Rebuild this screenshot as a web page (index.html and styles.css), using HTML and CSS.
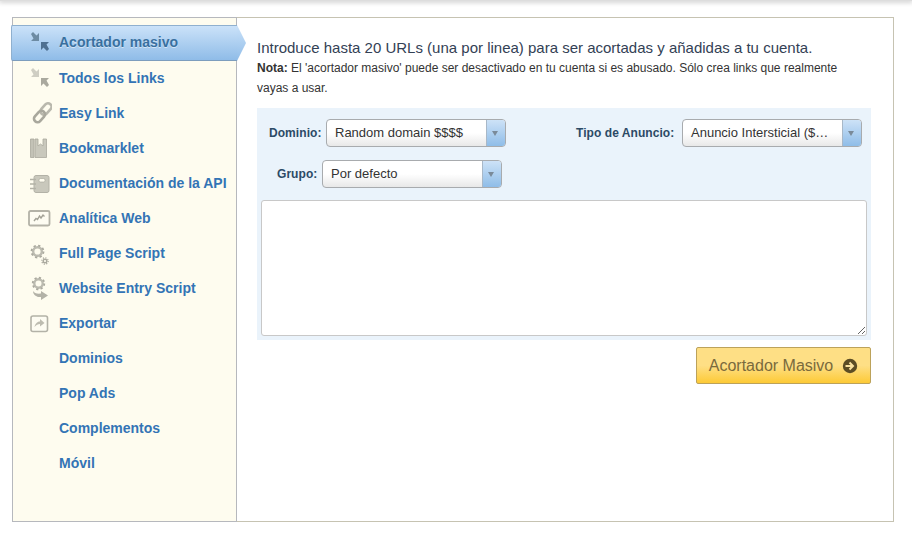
FILE: index.html
```html
<!DOCTYPE html>
<html lang="es">
<head>
<meta charset="utf-8">
<title>Acortador masivo</title>
<link rel="stylesheet" href="styles.css">
</head>
<body>
<div class="topbar"></div>
<div class="shell">
  <nav class="side">
    <a class="item active"><span class="ico"><svg width="24" height="24" viewBox="0 0 24 24"><path fill="#6d8ba3" d="M3 4 5 2l3.500 3.500L11 3v8H3l2.500-2.500z"/><path fill="#4f7091" d="M21 19l-2 2-3.500-3.500L13 20v-8h8l-2.500 2.500z"/></svg></span><span>Acortador masivo</span></a>
    <a class="item"><span class="ico"><svg width="24" height="24" viewBox="0 0 24 24"><path fill="#cfcec3" d="M3 4 5 2l3.500 3.500L11 3v8H3l2.500-2.500z"/><path fill="#aaa99e" d="M21 19l-2 2-3.500-3.500L13 20v-8h8l-2.500 2.500z"/></svg></span><span>Todos los Links</span></a>
    <a class="item"><span class="ico"><svg width="24" height="24" viewBox="0 0 24 24" fill="none" stroke-width="2.600"><rect x="14.500" y="1.500" width="7" height="13" rx="3.500" stroke="#b9b8ad" transform="rotate(42 18 8)"/><rect x="8" y="9" width="7" height="13" rx="3.500" stroke="#a9a89d" transform="rotate(42 11.500 15.500)"/></svg></span><span>Easy Link</span></a>
    <a class="item"><span class="ico"><svg width="24" height="24" viewBox="0 0 24 24"><path fill="#c3c2b6" stroke="#a9a89d" stroke-width=".8" d="M2.500 3h3.500v18.500H2.500z"/><path fill="#c9c8bc" stroke="#a9a89d" stroke-width=".8" d="M7 3h3v7l2.500-2 2.500 2V3h3.500v18.500H7z"/></svg></span><span>Bookmarklet</span></a>
    <a class="item"><span class="ico"><svg width="24" height="24" viewBox="0 0 24 24"><rect x="6" y="4.500" width="15" height="17" rx="2" fill="#c9c8bc" stroke="#b3b2a7"/><rect x="11" y="7.500" width="6" height="3.500" rx="1.500" fill="#fffdf0" stroke="#a3a297" stroke-width=".6"/><path stroke="#b3b2a7" stroke-width="1.600" d="M2 8.500h6M2 13h6M2 17.500h6"/></svg></span><span>Documentación de la API</span></a>
    <a class="item"><span class="ico"><svg width="24" height="24" viewBox="0 0 24 24"><rect x="1" y="5" width="20.500" height="14.500" rx="1.500" fill="#fdfcf2" stroke="#b3b2a7" stroke-width="1.800"/><path fill="none" stroke="#a3a297" stroke-width="1.400" d="M6 15l2-2.500 1.500 1 2-3.500 1.500 2 2-3 1.500 1.500"/></svg></span><span>Analítica Web</span></a>
    <a class="item"><span class="ico"><svg width="24" height="24" viewBox="0 0 24 24" fill="none"><circle cx="9.500" cy="10.500" r="4.300" stroke="#bcbbb0" stroke-width="2.400"/><circle cx="9.500" cy="10.500" r="6" stroke="#aaa99e" stroke-width="1.800" stroke-dasharray="2.300 2.400"/><circle cx="17" cy="20" r="1.800" stroke="#aaa99e" stroke-width="1.400"/><circle cx="17" cy="20" r="3.200" stroke="#aaa99e" stroke-width="1.200" stroke-dasharray="1.200 1.300"/></svg></span><span>Full Page Script</span></a>
    <a class="item"><span class="ico"><svg width="24" height="24" viewBox="0 0 24 24" fill="none"><circle cx="10.500" cy="7.500" r="4.200" stroke="#bcbbb0" stroke-width="2.400"/><circle cx="10.500" cy="7.500" r="5.800" stroke="#aaa99e" stroke-width="1.800" stroke-dasharray="2.200 2.300"/><path fill="#b3b2a7" d="M5 15c1 2 4 3 8 2.500V15l7 4.500-7 4.500v-3c-4 .5-8-2-8-6z"/></svg></span><span>Website Entry Script</span></a>
    <a class="item"><span class="ico"><svg width="24" height="24" viewBox="0 0 24 24"><rect x="3" y="5" width="16.500" height="15.500" rx="2" fill="#fdfcf2" stroke="#b3b2a7" stroke-width="1.600"/><path fill="#bdbcb0" d="M6.500 16c.5-3 2.500-5.500 5.500-5.500V8l4.500 4-4.500 3.500V13c-2 0-4 1-5.500 3z"/></svg></span><span>Exportar</span></a>
    <a class="item"><span class="ico"></span><span>Dominios</span></a>
    <a class="item"><span class="ico"></span><span>Pop Ads</span></a>
    <a class="item"><span class="ico"></span><span>Complementos</span></a>
    <a class="item"><span class="ico"></span><span>Móvil</span></a>
  </nav>
  <main class="main">
    <p class="intro">Introduce hasta 20 URLs (una por linea) para ser acortadas y añadidas a tu cuenta.</p>
    <p class="note"><b>Nota:</b> El 'acortador masivo' puede ser desactivado en tu cuenta si es abusado. Sólo crea links que realmente vayas a usar.</p>
    <form class="panel">
      <div class="row">
        <div class="field"><span class="lbl lbl-dom">Dominio:</span><div class="combo"><span class="val">Random domain $$$$</span><span class="arrow"></span></div></div>
        <div class="field"><span class="lbl lbl-tipo">Tipo de Anuncio:</span><div class="combo"><span class="val">Anuncio Intersticial ($…</span><span class="arrow"></span></div></div>
      </div>
      <div class="row group">
        <div class="field"><span class="lbl lbl-grupo">Grupo:</span><div class="combo"><span class="val">Por defecto</span><span class="arrow"></span></div></div>
      </div>
      <textarea class="urls"></textarea>
    </form>
    <div class="actions">
      <button class="go" type="button">Acortador Masivo<svg width="16" height="16" viewBox="0 0 16 16"><circle cx="8" cy="8" r="7.200" fill="#5c4d24"/><path fill="none" stroke="#fbe3a0" stroke-width="2" d="M3.500 8h7M7.500 4.500 11 8l-3.500 3.500"/></svg></button>
    </div>
  </main>
</div>
</body>
</html>
```
FILE: styles.css
```css
* { box-sizing: border-box; }
html, body { margin: 0; padding: 0; background: #fff; }
body { font-family: "Liberation Sans", Arial, sans-serif; color: #333; height: 542px; overflow: hidden; }
.topbar { height: 1px; background: #ddd; box-shadow: 0 0 5px 1px rgba(0,0,0,.28); }
.shell {
  display: flex;
  height: 505px;
  margin: 16px 18px 0 12px;
  border: 1px solid #c6c3b2;
}
.side {
  width: 225px;
  flex: none;
  margin: -1px 0 -1px -1px;
  padding-top: 7px;
  background: #fefcef;
  border: 1px solid #b6b8bd;
}
.item {
  display: flex;
  align-items: center;
  height: 35px;
  padding-left: 15px;
  font-size: 14px;
  font-weight: bold;
  color: #3374b5;
}
.ico { width: 24px; height: 24px; margin-right: 7px; flex: none; display: block; }
.ico svg { display: block; }
.item.active {
  position: relative;
  height: 36px;
  margin: 0 -1px -1px -2px;
  padding-left: 16px;
  padding-bottom: 2px;
  color: #39709f;
  background: linear-gradient(#cbe2f9, #8fbce8);
  border-top: 1px solid #8fb0cf;
  border-bottom: 1px solid #7d9dbd;
  border-left: 1px solid #8fb0cf;
  border-radius: 2px 0 0 2px;
  text-shadow: 0 1px 0 rgba(255,255,255,.5);
}
.item.active::after {
  content: "";
  position: absolute;
  left: 100%;
  top: -1px;
  width: 9px;
  height: 36px;
  background: linear-gradient(#cbe2f9, #8fbce8);
  clip-path: polygon(0 0, 100% 50%, 0 100%);
}
.main { flex: 1; padding: 20px 22px 0 20px; min-width: 0; }
.intro { margin: 0; font-size: 15px; line-height: 20px; color: #334155; }
.note { margin: 0 0 10px; font-size: 12px; line-height: 20px; width: 590px; color: #333; }
.panel { display: block; background: #eaf3fb; height: 232px; padding: 11px 4px 0; }
.row { display: flex; justify-content: space-between; padding: 0 5px 0 8px; }
.row.group { margin-top: 13px; padding-left: 16px; }
.field { display: flex; align-items: center; }
.lbl { font-size: 12px; font-weight: bold; letter-spacing: .06px; color: #2c4a66; white-space: nowrap; }
.lbl-dom { width: 57px; }
.lbl-tipo { width: 106px; }
.lbl-grupo { width: 45px; }
.combo {
  display: flex;
  width: 180px;
  height: 28px;
  border: 1px solid #a8abae;
  border-radius: 4px;
  overflow: hidden;
  background: linear-gradient(#fff 50%, #e8e8e8);
}
.val {
  flex: 1;
  min-width: 0;
  padding: 0 8px;
  font-size: 13px;
  line-height: 25px;
  color: #333;
  white-space: nowrap;
}
.arrow {
  flex: none;
  position: relative;
  width: 19px;
  background: linear-gradient(#cde2f7, #8fbde8);
  border-left: 1px solid #a8b8c8;
}
.arrow::after {
  content: "";
  position: absolute;
  left: 5px;
  top: 11px;
  border: 3.500px solid transparent;
  border-top: 5px solid #7a8a99;
  border-bottom: 0;
}
.urls {
  display: block;
  width: 606px;
  height: 136px;
  margin: 12px 0 0;
  padding: 4px;
  background: #fff;
  border: 1px solid #c8c8c8;
  border-radius: 3px;
  outline: none;
}
.actions { display: flex; justify-content: flex-end; margin-top: 7px; }
.go {
  display: flex;
  align-items: center;
  justify-content: center;
  gap: 9px;
  width: 175px;
  height: 37px;
  padding: 0;
  font-family: inherit;
  font-size: 16px;
  color: #7a6a3c;
  background: linear-gradient(#fedf85 50%, #fdca36);
  border: 1px solid #bca25a;
  border-radius: 2px;
}
.go svg { display: block; }
```
